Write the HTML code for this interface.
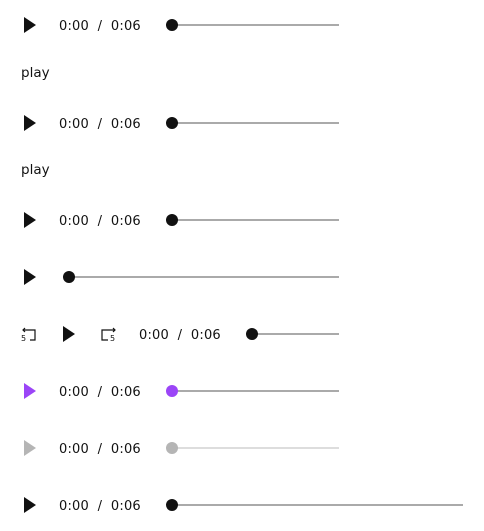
<!DOCTYPE html>
<html><head><style>
body{margin:0;width:484px;height:531px;background:#fff;position:relative;font-family:"DejaVu Sans","Liberation Sans",sans-serif;overflow:hidden}
.r{position:absolute;left:0;width:484px;height:20px}
.t{position:absolute;top:4px;font-size:13px;color:#111;white-space:pre;line-height:16px;letter-spacing:0.2px}
.tr{position:absolute;top:9px;height:2px;background:#aaa}
.th{position:absolute;top:4px;width:12px;height:12px;border-radius:50%;background:#111}
.p{position:absolute;top:2px;width:0;height:0;border-top:8px solid transparent;border-bottom:8px solid transparent;border-left:12px solid #111}
.lab{position:absolute;left:21px;font-size:13.5px;color:#111}
</style></head><body>
<div class="r" style="top:15px"><div class="p" style="left:24px"></div><div class="t" style="left:59px">0:00  /  0:06</div><div class="tr" style="left:172px;width:167px"></div><div class="th" style="left:166px"></div></div>
<div class="lab" style="top:65px">play</div>
<div class="r" style="top:113px"><div class="p" style="left:24px"></div><div class="t" style="left:59px">0:00  /  0:06</div><div class="tr" style="left:172px;width:167px"></div><div class="th" style="left:166px"></div></div>
<div class="lab" style="top:162px">play</div>
<div class="r" style="top:210px"><div class="p" style="left:24px"></div><div class="t" style="left:59px">0:00  /  0:06</div><div class="tr" style="left:172px;width:167px"></div><div class="th" style="left:166px"></div></div>
<div class="r" style="top:267px"><div class="p" style="left:24px"></div><div class="tr" style="left:69px;width:270px"></div><div class="th" style="left:63px"></div></div>
<div class="r" style="top:324px">
<svg style="position:absolute;left:20px;top:2px" width="18" height="16" viewBox="0 0 18 16"><path d="M5 2 L3 4 L5 6 M3 4 H15 V14 H10" fill="none" stroke="#111" stroke-width="1.2"/><text x="1" y="15" font-size="8" font-family="DejaVu Sans" fill="#111">5</text></svg>
<div class="p" style="left:63px"></div>
<svg style="position:absolute;left:100px;top:2px" width="18" height="16" viewBox="0 0 18 16"><path d="M13 2 L15 4 L13 6 M15 4 H2 V14 H8" fill="none" stroke="#111" stroke-width="1.2"/><text x="10" y="15" font-size="8" font-family="DejaVu Sans" fill="#111">5</text></svg>
<div class="t" style="left:139px">0:00  /  0:06</div><div class="tr" style="left:252px;width:87px"></div><div class="th" style="left:246px"></div></div>
<div class="r" style="top:381px"><div class="p" style="left:24px;border-left-color:#9b45f7"></div><div class="t" style="left:59px">0:00  /  0:06</div><div class="tr" style="left:172px;width:167px"></div><div class="th" style="left:166px;background:#9b45f7"></div></div>
<div class="r" style="top:438px"><div class="p" style="left:24px;border-left-color:#b5b5b5"></div><div class="t" style="left:59px">0:00  /  0:06</div><div class="tr" style="left:172px;width:167px;background:#ddd"></div><div class="th" style="left:166px;background:#b5b5b5"></div></div>
<div class="r" style="top:495px"><div class="p" style="left:24px"></div><div class="t" style="left:59px">0:00  /  0:06</div><div class="tr" style="left:172px;width:291px"></div><div class="th" style="left:166px"></div></div>
</body></html>
